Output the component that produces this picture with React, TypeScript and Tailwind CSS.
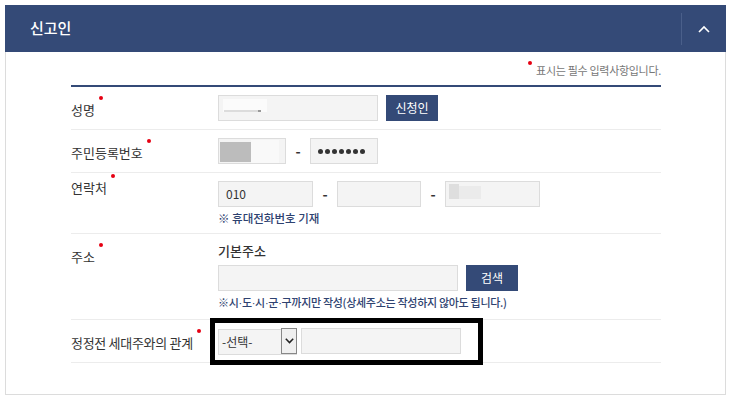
import React from 'react';

const font = { fontFamily: '"Noto Sans CJK KR", "Noto Sans", sans-serif' };
const latin = { fontFamily: '"Liberation Sans", sans-serif' };

const Dash = () => (
  <span className="w-[24px] text-center text-[14px] font-bold text-[#333]">-</span>
);

const Field = ({ className = '', children }: { className?: string; children?: React.ReactNode }) => (
  <div className={`h-[26px] bg-[#f4f4f4] border border-[#dcdcdc] relative flex items-center ${className}`}>
    {children}
  </div>
);

const Row = ({ label, labelPad = 'pt-[6px]', children }: { label: string; labelPad?: string; children: React.ReactNode }) => (
  <div className="flex border-b border-[#ececec] py-2">
    <div className={`w-[147px] text-[13px] text-[#333] ${labelPad}`}>
      <span className="relative leading-[18px] block w-fit">
        {label}
        <span className="absolute right-[-8px] top-[-5px] w-[4px] h-[4px] rounded-full bg-[#e60012]" />
      </span>
    </div>
    <div className="flex-1">{children}</div>
  </div>
);

const NavyButton = ({ children }: { children: React.ReactNode }) => (
  <button className="ml-2 w-[52px] h-[26px] bg-[#344a77] text-white text-[12px] leading-none">
    {children}
  </button>
);

export default function App() {
  return (
    <div className="w-[734px] h-[404px] bg-white pt-[5px] pl-[5px]" style={font}>
      <div className="w-[721px]">
        <div className="h-[47px] bg-[#344a77] flex items-center">
          <h2 className="flex-1 pl-[25px] text-white text-[15px] font-medium">신고인</h2>
          <div className="w-[45px] h-[32px] border-l border-[#4a5f8a] flex items-center justify-center">
            <svg width="12" height="8" viewBox="0 0 12 8" fill="none">
              <path d="M1 7 L6 2 L11 7" stroke="white" strokeWidth="1.6" />
            </svg>
          </div>
        </div>

        <div className="border-x border-b border-[#dcdcdc] pt-[10px] pb-[31px]">
          <div className="ml-[65px] w-[590px]">
            <p className="text-right text-[11px] leading-[16px] text-[#777] mb-[7px] tracking-[-0.3px]">
              <span className="inline-block w-[4px] h-[4px] rounded-full bg-[#e60012] align-top mr-[4px] mt-[-1px]" />
              표시는 필수 입력사항입니다.
            </p>

            <div className="border-t-2 border-[#344a77]">
              <Row label="성명">
                <div className="flex items-center">
                  <Field className="w-[160px]">
                    <div className="absolute left-[4px] top-[3px] w-[44px] h-[13px] bg-[#fbfbfb]" />
                    <div className="absolute left-[5px] top-[14px] w-[36px] h-[2px] bg-[#dcdcdc]" />
                    <div className="absolute left-[39px] top-[14px] w-[3px] h-[2px] bg-[#999]" />
                  </Field>
                  <NavyButton>신청인</NavyButton>
                </div>
              </Row>

              <Row label="주민등록번호">
                <div className="flex items-center">
                  <Field className="w-[68px]">
                    <div className="absolute left-[1px] top-[3px] w-[31px] h-[20px] bg-[#bcbcbc]" />
                    <div className="absolute left-[32px] top-[1px] w-[28px] h-[23px] bg-[#f9f9f9]" />
                  </Field>
                  <Dash />
                  <Field className="w-[68px] pl-[7px]">
                    <span className="flex gap-[2px]">
                      {[0, 1, 2, 3, 4, 5, 6].map((i) => (
                        <span key={i} className="w-[5px] h-[5px] rounded-full bg-[#333]" />
                      ))}
                    </span>
                  </Field>
                </div>
              </Row>

              <Row label="연락처" labelPad="mt-[-2px]">
                <div className="flex items-center">
                  <Field className="w-[95px] pl-[7px]">
                    <span className="text-[12px] text-[#333]">010</span>
                  </Field>
                  <Dash />
                  <Field className="w-[84px]" />
                  <Dash />
                  <Field className="w-[95px]">
                    <div className="absolute left-[3px] top-[2px] w-[10px] h-[15px] bg-[#dedede]" />
                    <div className="absolute left-[13px] top-[4px] w-[22px] h-[13px] bg-[#ebebeb]" />
                  </Field>
                </div>
                <p className="mt-[4px] text-[11.5px] leading-[14px] font-medium text-[#2e4270]">※ 휴대전화번호 기재</p>
              </Row>

              <Row label="주소">
                <p className="text-[13px] leading-[18px] font-medium text-[#333] mb-[5px]">기본주소</p>
                <div className="flex items-center">
                  <Field className="w-[240px]" />
                  <NavyButton>검색</NavyButton>
                </div>
                <p className="mt-[4px] text-[11px] leading-[15px] font-medium text-[#2e4270] tracking-[-0.3px]">
                  ※시<span style={latin}>·</span>도<span style={latin}>·</span>시<span style={latin}>·</span>군<span style={latin}>·</span>구까지만 작성(상세주소는 작성하지 않아도 됩니다.)
                </p>
              </Row>

              <Row label="정정전 세대주와의 관계" labelPad="pt-[6px] tracking-[-0.3px]">
                <div className="relative flex items-center">
                  <div className="relative w-[79px] h-[26px]">
                    <select className="appearance-none w-full h-full bg-[#f4f4f4] border border-[#dcdcdc] pl-[3px] text-[12px] text-[#333] outline-none">
                      <option>-선택-</option>
                    </select>
                    <span className="absolute right-0 top-0 w-[16px] h-[26px] border border-[#888] bg-[#f0f0f0] flex items-center justify-center pointer-events-none">
                      <svg width="9" height="6" viewBox="0 0 9 6" fill="none">
                        <path d="M0.8 0.8 L4.5 4.6 L8.2 0.8" stroke="#222" strokeWidth="1.5" />
                      </svg>
                    </span>
                  </div>
                  <Field className="ml-[4px] w-[160px]" />
                  <div className="absolute left-[-8px] top-[-10px] w-[273px] h-[47px] border-[5px] border-black pointer-events-none" />
                </div>
              </Row>
            </div>
          </div>
        </div>
      </div>
    </div>
  );
}
